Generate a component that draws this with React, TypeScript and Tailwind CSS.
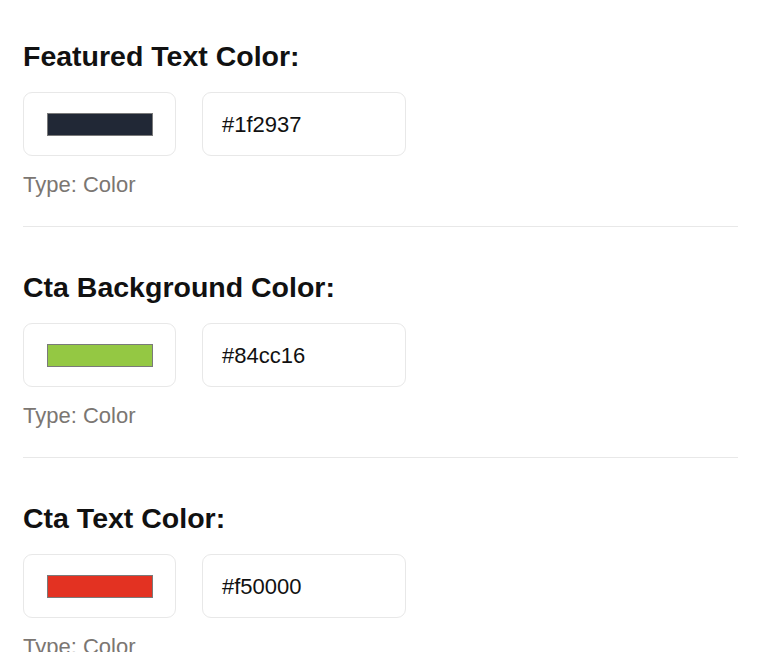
import React from "react";

const items = [
  { label: "Featured Text Color:", hex: "#1f2937", swatch: "#212836" },
  { label: "Cta Background Color:", hex: "#84cc16", swatch: "#94c843" },
  { label: "Cta Text Color:", hex: "#f50000", swatch: "#e33222" },
];

export default function App() {
  return (
    <div
      className="w-[780px] h-[664px] overflow-hidden bg-white"
      style={{ fontFamily: '"Liberation Sans", Arial, Helvetica, sans-serif' }}
    >
      <div className="h-[652px] overflow-hidden pt-[40px] pl-[23px]">
        <div className="w-[715px] flex flex-col gap-[44px]">
          {items.map((it) => (
            <div key={it.label} className="pb-[27px] border-b border-[#e8e8e8]">
              <h2 className="text-[28.5px] leading-[32px] font-bold text-[#111111]">{it.label}</h2>
              <div className="mt-[20px] flex gap-[26px]">
                <div className="w-[153px] h-[64px] rounded-[9px] border border-[#e8e8e8] flex items-center justify-center">
                  <div
                    className="w-[106px] h-[23px] border border-[#7a7a7a]"
                    style={{ backgroundColor: it.swatch }}
                  />
                </div>
                <div className="w-[204px] h-[64px] rounded-[9px] border border-[#e8e8e8] flex items-center pl-[19px] text-[22px] text-[#111111]">
                  {it.hex}
                </div>
              </div>
              <div className="mt-[15px] text-[22px] leading-[28px] text-[#7b7672]">Type: Color</div>
            </div>
          ))}
        </div>
      </div>
    </div>
  );
}
